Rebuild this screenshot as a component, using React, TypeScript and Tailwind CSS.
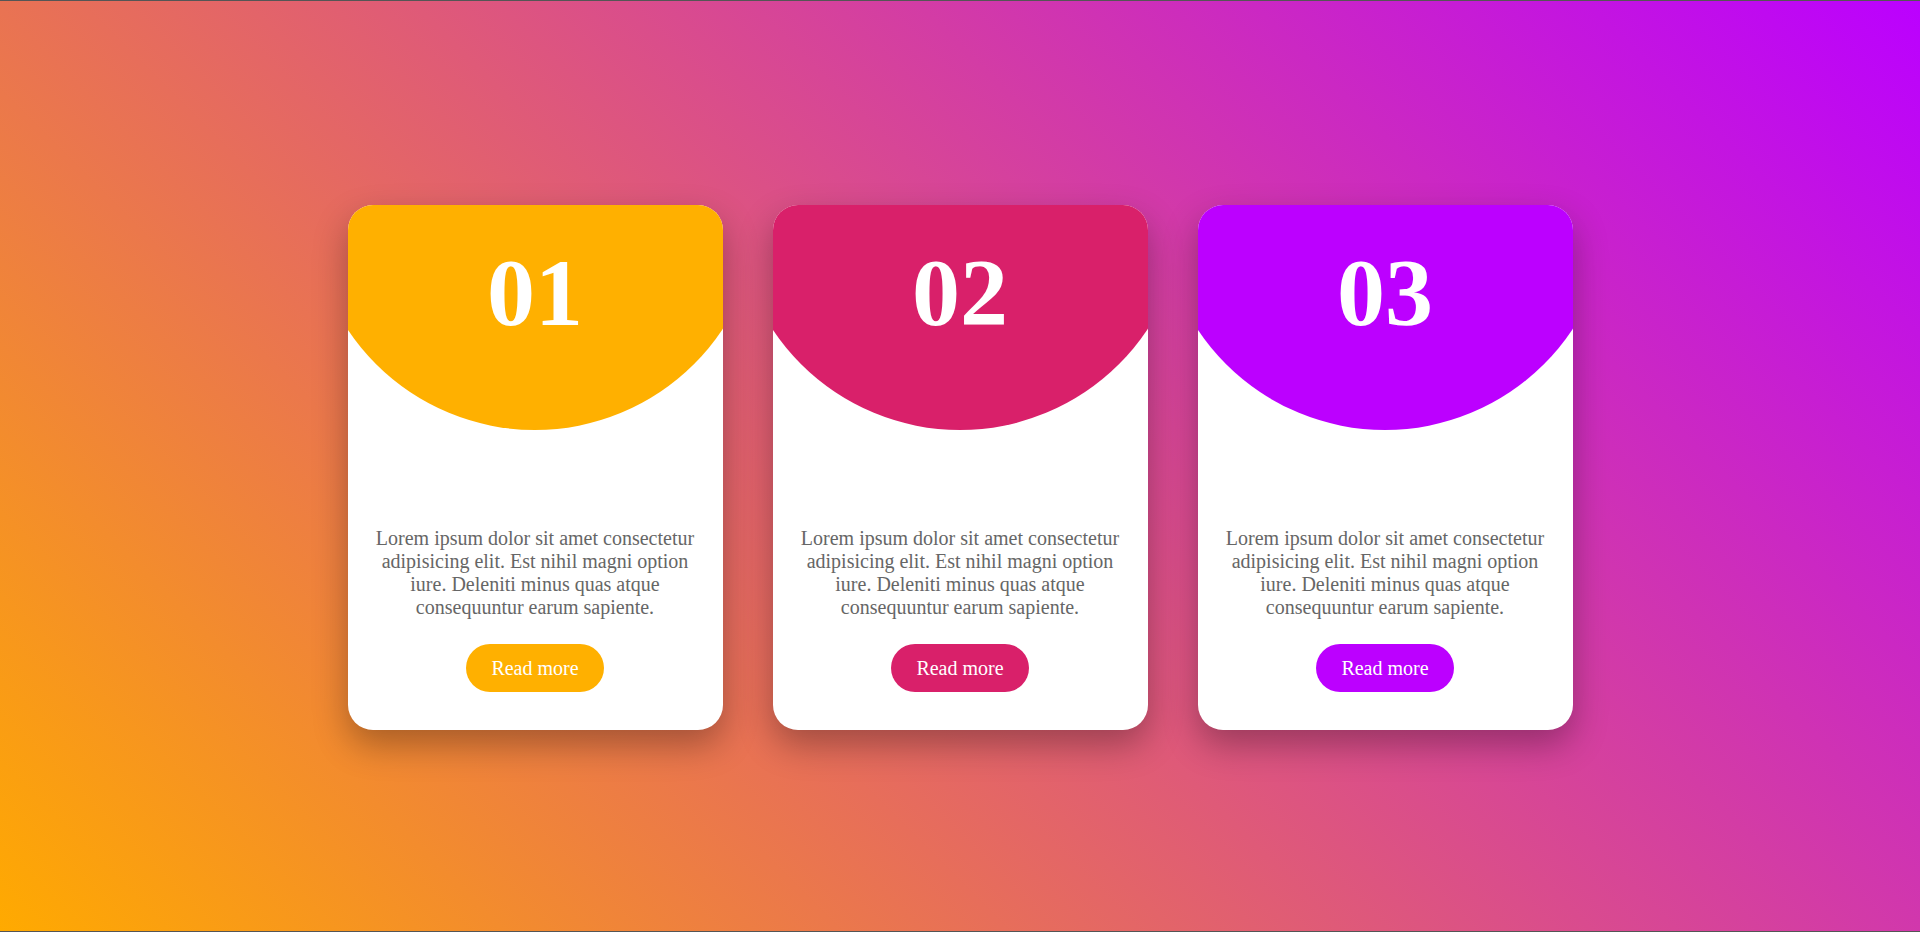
const cards = [
  { num: "01", bg: "bg-[#ffb000]" },
  { num: "02", bg: "bg-[#d9206a]" },
  { num: "03", bg: "bg-[#bc00ff]" },
];

const text =
  "Lorem ipsum dolor sit amet consectetur adipisicing elit. Est nihil magni option iure. Deleniti minus quas atque consequuntur earum sapiente.";

const App = () => {
  return (
    <div className="h-[932px] w-full flex items-center justify-center bg-[linear-gradient(45deg,#ffaa00,#bb00ff)] border-y border-[#555] font-['Liberation_Serif','Times_New_Roman',serif]">
      <div className="flex gap-[50px] mt-[2px]">
        {cards.map((card) => (
          <div
            key={card.num}
            className="relative w-[375px] h-[525px] rounded-[25px] bg-white overflow-hidden flex flex-col items-center shadow-[0_15px_35px_rgba(0,0,0,0.3)]"
          >
            {/* half circle behind the number */}
            <div className={`absolute left-1/2 -translate-x-1/2 -top-[225px] w-[450px] h-[450px] rounded-full ${card.bg}`} />

            <div className="relative pt-[40px] text-[96px] leading-none font-bold text-white">
              {card.num}
            </div>

            <div className="relative flex-1" />

            <p className="relative px-[25px] text-center text-[20px] leading-[23px] text-[#666]">
              {text}
            </p>

            <button
              className={`relative mt-[25px] mb-[38px] h-[48px] px-[25px] rounded-full text-[20px] text-white flex items-center justify-center ${card.bg}`}
            >
              Read more
            </button>
          </div>
        ))}
      </div>
    </div>
  );
};

export default App;
